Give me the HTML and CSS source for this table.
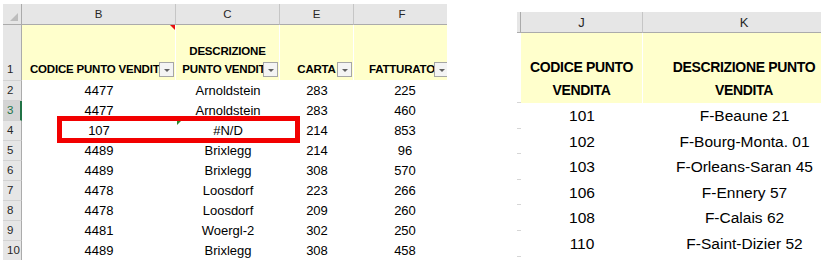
FILE: index.html
```html
<!DOCTYPE html>
<html lang="it">
<head>
<meta charset="utf-8">
<title>Foglio</title>
<link rel="stylesheet" href="styles.css">
</head>
<body>
<div class="page">
  <div class="sheet left">
    <div class="grid-left">
      <div class="ch corner"><span class="tri"></span></div>
      <div class="ch">B</div>
      <div class="ch">C</div>
      <div class="ch">E</div>
      <div class="ch">F</div>

      <div class="rh rh1">1</div>
      <div class="hd hd-b"><span class="lbl">CODICE PUNTO VENDITA</span><span class="fb"></span><span class="comment"></span></div>
      <div class="hd"><span class="lbl">DESCRIZIONE<br>PUNTO VENDITA</span><span class="fb"></span></div>
      <div class="hd"><span class="lbl">CARTA</span><span class="fb"></span></div>
      <div class="hd"><span class="lbl">FATTURATO</span><span class="fb"></span></div>

      <div class="rh">2</div><div class="d">4477</div><div class="d">Arnoldstein</div><div class="d">283</div><div class="d df">225</div>
      <div class="rh sel">3</div><div class="d">4477</div><div class="d">Arnoldstein</div><div class="d">283</div><div class="d df">460</div>
      <div class="rh">4</div><div class="d">107</div><div class="d err">#N/D</div><div class="d">214</div><div class="d df">853</div>
      <div class="rh">5</div><div class="d">4489</div><div class="d">Brixlegg</div><div class="d">214</div><div class="d df">96</div>
      <div class="rh">6</div><div class="d">4489</div><div class="d">Brixlegg</div><div class="d">308</div><div class="d df">570</div>
      <div class="rh">7</div><div class="d">4478</div><div class="d">Loosdorf</div><div class="d">223</div><div class="d df">266</div>
      <div class="rh">8</div><div class="d">4478</div><div class="d">Loosdorf</div><div class="d">209</div><div class="d df">260</div>
      <div class="rh">9</div><div class="d">4481</div><div class="d">Woergl-2</div><div class="d">302</div><div class="d df">250</div>
      <div class="rh">10</div><div class="d">4489</div><div class="d">Brixlegg</div><div class="d">308</div><div class="d df">458</div>
    </div>
    <div class="redbox"></div>
  </div>

  <div class="sheet right">
    <div class="grid-right">
      <div class="ch stub"></div>
      <div class="ch ch2">J</div>
      <div class="ch ch2">K</div>

      <div class="tick"></div>
      <div class="hd2">CODICE PUNTO<br>VENDITA</div>
      <div class="hd2">DESCRIZIONE PUNTO<br>VENDITA</div>

      <div class="tick"></div><div class="d2">101</div><div class="d2">F-Beaune 21</div>
      <div class="tick"></div><div class="d2">102</div><div class="d2">F-Bourg-Monta. 01</div>
      <div class="tick"></div><div class="d2">103</div><div class="d2">F-Orleans-Saran 45</div>
      <div class="tick"></div><div class="d2">106</div><div class="d2">F-Ennery 57</div>
      <div class="tick"></div><div class="d2">108</div><div class="d2">F-Calais 62</div>
      <div class="tick"></div><div class="d2">110</div><div class="d2">F-Saint-Dizier 52</div>
    </div>
  </div>
</div>
</body>
</html>
```
FILE: styles.css
```css
* { box-sizing: border-box; margin: 0; padding: 0; }
html, body { width: 830px; height: 267px; background: #fff; overflow: hidden; }
body { font-family: "Liberation Sans", Arial, sans-serif; color: #000; }

.page { display: flex; align-items: flex-start; padding: 4px 0 0 3px; gap: 70px; }
.sheet { position: relative; overflow: hidden; }

/* ---------- left sheet ---------- */
.left { width: 444px; height: 256px; }
.grid-left {
  display: grid;
  grid-template-columns: 19px 154px 104px 74px 97px;
  grid-template-rows: 21px 56px repeat(9, 20px);
}
.ch {
  background: #e6e6e6;
  border-right: 1px solid #c6c6c6;
  border-bottom: 1px solid #ababab;
  font-size: 11.5px;
  color: #262626;
  display: flex; align-items: center; justify-content: center;
}
.corner { position: relative; border-right-color: #ababab; }
.corner .tri {
  position: absolute; right: 3px; bottom: 3px;
  border-left: 8px solid transparent; border-bottom: 8px solid #bdbdbd;
}
.rh {
  background: #e6e6e6;
  border-right: 1px solid #ababab;
  border-bottom: 1px solid #d2d2d2;
  font-size: 11.5px; color: #262626;
  padding-left: 4px; line-height: 19px;
}
.rh1 { display: flex; align-items: flex-end; padding-bottom: 2px; line-height: 18px; }
.rh.sel { background: #d4d4d4; color: #217346; border-right: 2px solid #217346; }

.hd {
  position: relative;
  background: #ffffcc;
  border-right: 1px solid #fff;
  border-bottom: 1px solid #fff;
  overflow: hidden;
  display: flex; align-items: flex-end;
  font-weight: bold; font-size: 11.5px; letter-spacing: -0.2px;
  line-height: 18px; padding-bottom: 2px;
  white-space: nowrap;
}
.hd .lbl { flex: 1; min-width: 0; text-align: center; }
.hd-b { padding-left: 8px; }
.hd-b .lbl { text-align: left; }
.fb {
  position: absolute; right: 1px; bottom: 3px;
  width: 15px; height: 15px;
  border: 1px solid #a6a6a6; background: #f4f4f4;
}
.fb::after {
  content: ""; position: absolute; left: 4px; top: 6px;
  border-left: 3px solid transparent; border-right: 3px solid transparent;
  border-top: 3px solid #606060;
}
.comment {
  position: absolute; top: 0; right: 0;
  border-top: 5px solid #e81010; border-left: 5px solid transparent;
}

.d { line-height: 20px; text-align: center; font-size: 13px; white-space: nowrap; }
.df { padding-left: 5px; }
.err { position: relative; }
.err::before {
  content: ""; position: absolute; left: 1px; top: 0;
  border-top: 4px solid #2a8a2a; border-right: 4px solid transparent;
}
.redbox {
  position: absolute; left: 54px; top: 112px;
  width: 243px; height: 27px;
  border: 5px solid #f20000;
}

/* ---------- right sheet ---------- */
.right { margin-top: 8px; width: 304px; height: 248px; }
.grid-right {
  display: grid;
  grid-template-columns: 4px 122px 203px;
  grid-template-rows: 21px 70px repeat(6, 25.6px);
}
.ch2 { font-size: 13px; }
.stub { border-right-color: #ababab; }
.tick { border-bottom: 1px solid #d6d6d6; }
.hd2 {
  background: #ffffcc;
  border-right: 1px solid #fff;
  display: flex; align-items: flex-end; justify-content: center;
  text-align: center;
  font-weight: bold; font-size: 14px; letter-spacing: -0.35px;
  line-height: 23px; padding-bottom: 1px;
  white-space: nowrap;
}
.d2 { line-height: 25.6px; text-align: center; font-size: 15.5px; white-space: nowrap; }
```
